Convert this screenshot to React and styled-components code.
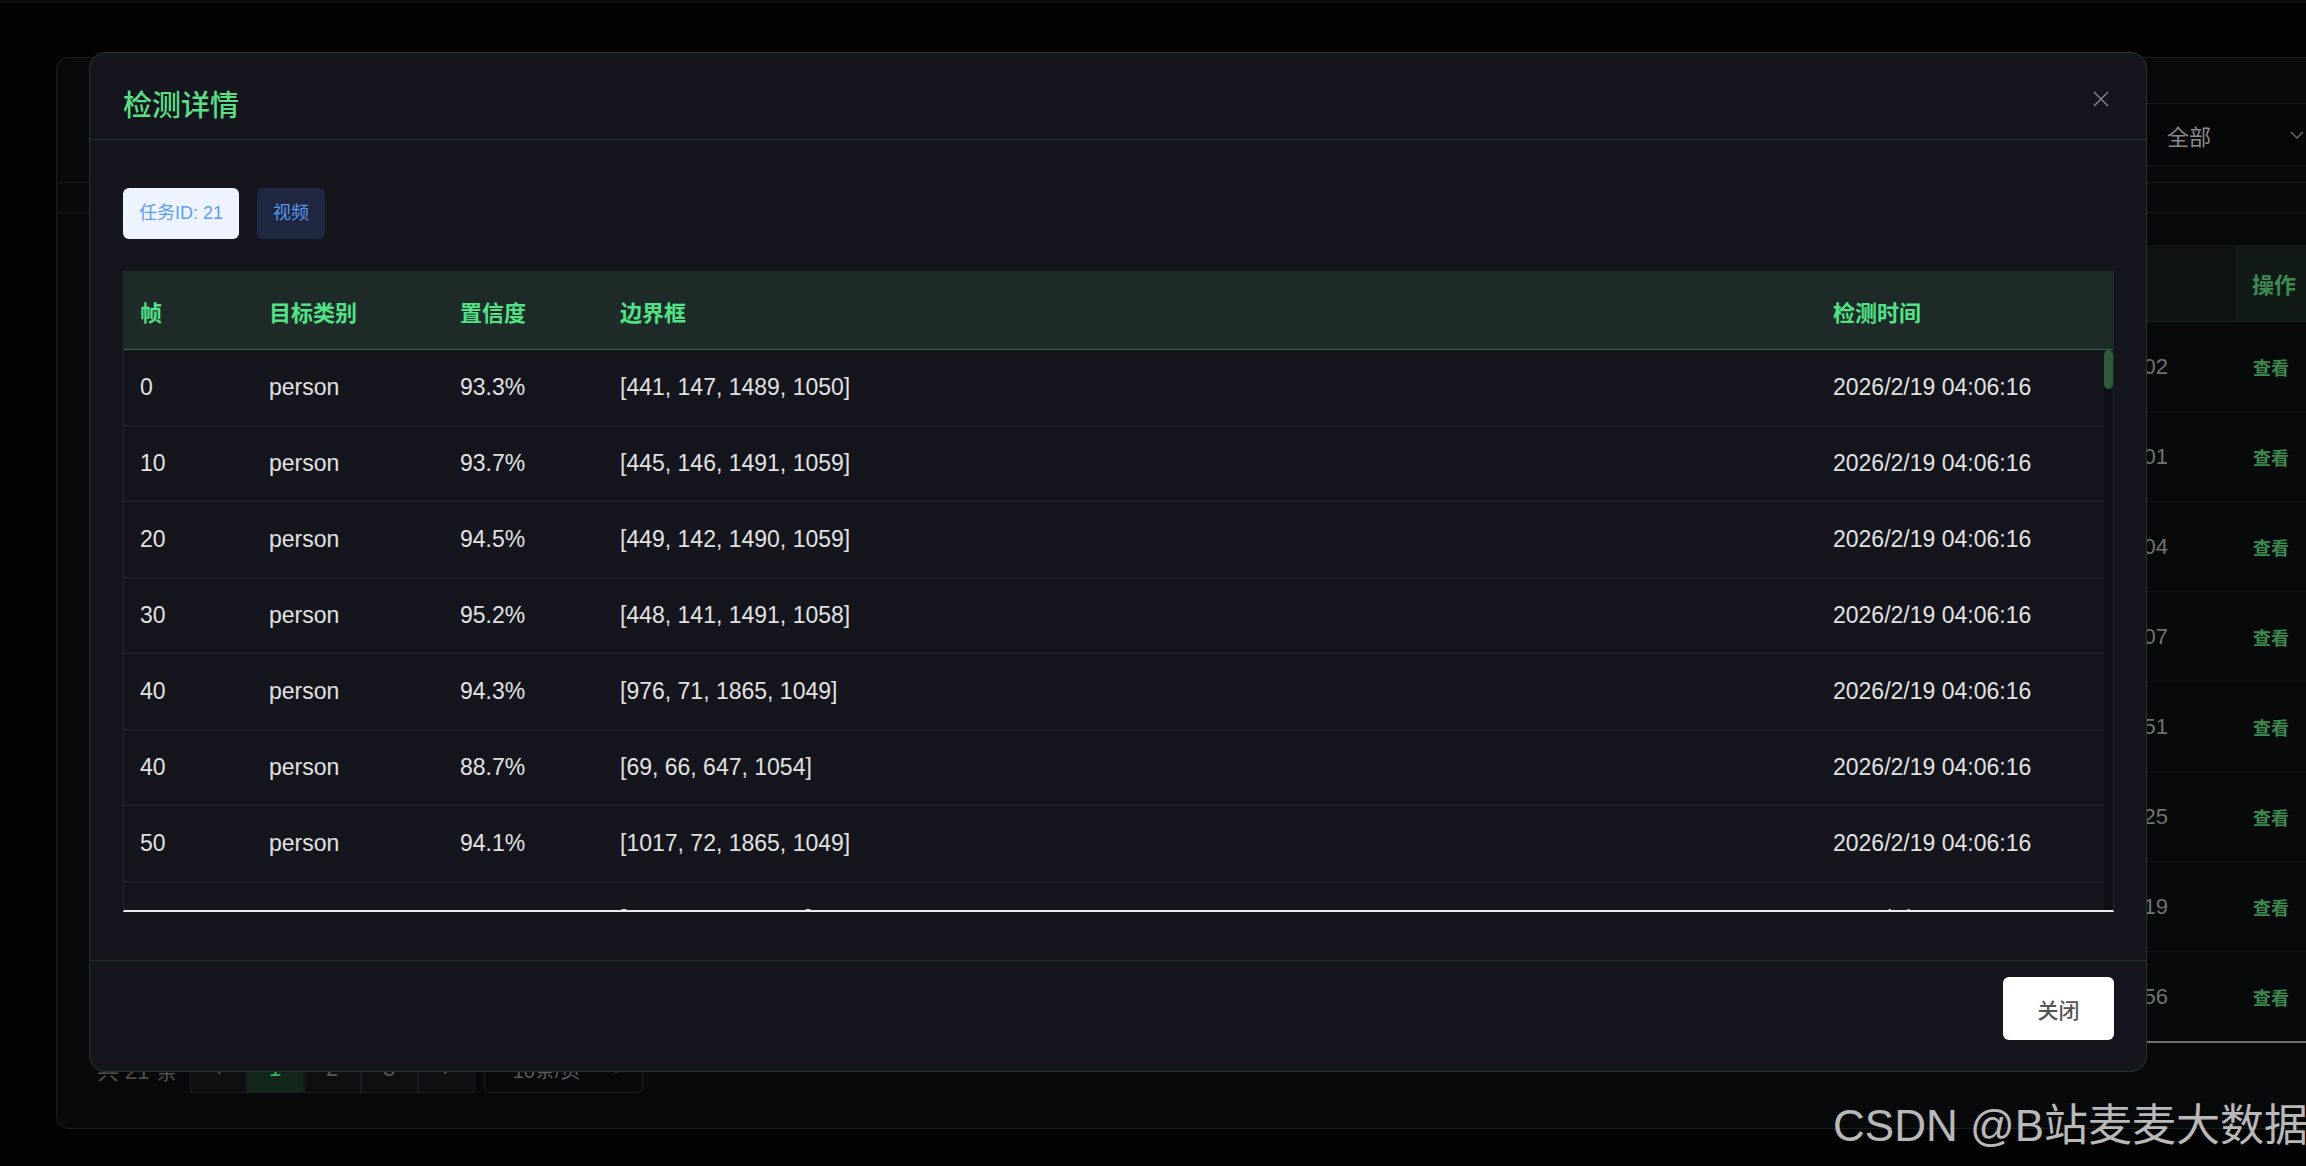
import React from "react";
import styled, { createGlobalStyle } from "styled-components";

const GlobalStyle = createGlobalStyle`
  html, body {
    margin: 0;
    padding: 0;
    background: #030303;
  }
  body {
    font-family: "Liberation Sans", "Noto Sans CJK SC", sans-serif;
  }
  * {
    box-sizing: border-box;
  }
`;

const detections = [
  ["0", "person", "93.3%", "[441, 147, 1489, 1050]"],
  ["10", "person", "93.7%", "[445, 146, 1491, 1059]"],
  ["20", "person", "94.5%", "[449, 142, 1490, 1059]"],
  ["30", "person", "95.2%", "[448, 141, 1491, 1058]"],
  ["40", "person", "94.3%", "[976, 71, 1865, 1049]"],
  ["40", "person", "88.7%", "[69, 66, 647, 1054]"],
  ["50", "person", "94.1%", "[1017, 72, 1865, 1049]"],
  ["50", "person", "89.2%", "[68, 65, 646, 1053]"],
];

const bgTimes = ["02", "01", "04", "07", "51", "25", "19", "56"];

// the list holds ~106 detections, only the first rows fit in view
const thumbHeight = 39;

export default function App() {
  return (
    <Page>
      <GlobalStyle />
      <Card>
        <FilterBar>
          <SearchBox />
          <SelectBox>
            全部
            <Chevron viewBox="0 0 16 16">
              <path d="M2 5l6 6 6-6" />
            </Chevron>
          </SelectBox>
        </FilterBar>
        <StatsStrip />
        <BgTable>
          <BgHeadRow>
            <BgCell />
            <BgCell />
            <BgActionHead>操作</BgActionHead>
          </BgHeadRow>
          {bgTimes.map((t, i) => (
            <BgRow key={i}>
              <BgCell />
              <BgTime>2026/2/19 04:06:{t}</BgTime>
              <BgAction>查看</BgAction>
            </BgRow>
          ))}
        </BgTable>
        <Pager>
          <PagerTotal>共 21 条</PagerTotal>
          <PagerButtons>
            <PageBtn>‹</PageBtn>
            <PageBtn active>1</PageBtn>
            <PageBtn>2</PageBtn>
            <PageBtn>3</PageBtn>
            <PageBtn>›</PageBtn>
          </PagerButtons>
          <PageSize>
            10条/页
            <Chevron viewBox="0 0 16 16">
              <path d="M2 5l6 6 6-6" />
            </Chevron>
          </PageSize>
        </Pager>
      </Card>

      <Mask>
        <Modal>
          <ModalHeader>
            <ModalTitle>检测详情</ModalTitle>
            <CloseIcon viewBox="0 0 16 16">
              <path d="M1 1l14 14M15 1L1 15" />
            </CloseIcon>
          </ModalHeader>
          <ModalBody>
            <TagRow>
              <Tag light>任务ID: 21</Tag>
              <Tag>视频</Tag>
            </TagRow>
            <DetailTable>
              <HeadRow>
                <HeadCell>帧</HeadCell>
                <HeadCell>目标类别</HeadCell>
                <HeadCell>置信度</HeadCell>
                <HeadCell>边界框</HeadCell>
                <HeadCell>检测时间</HeadCell>
              </HeadRow>
              <BodyWrap>
                <RowsViewport>
                  {detections.map((r, i) => (
                    <BodyRow key={i}>
                      <Cell>{r[0]}</Cell>
                      <Cell>{r[1]}</Cell>
                      <Cell>{r[2]}</Cell>
                      <Cell>{r[3]}</Cell>
                      <Cell>2026/2/19 04:06:16</Cell>
                    </BodyRow>
                  ))}
                </RowsViewport>
                <ScrollRail>
                  <ScrollThumb style={{ height: thumbHeight }} />
                </ScrollRail>
              </BodyWrap>
            </DetailTable>
          </ModalBody>
          <ModalFooter>
            <CloseButton>关闭</CloseButton>
          </ModalFooter>
        </Modal>
      </Mask>

      <Watermark>CSDN @B站麦麦大数据</Watermark>
    </Page>
  );
}

const Page = styled.div`
  position: relative;
  width: 2306px;
  height: 1166px;
  overflow: hidden;
  background: #030303;
  border-top: 3px solid #0b0d0c;
  padding: 54px 0 0 56px;
`;

const Card = styled.div`
  width: 2300px;
  height: 1072px;
  background: #08090b;
  border: 1px solid #14231a;
  border-radius: 12px;
  display: flex;
  flex-direction: column;
`;

const FilterBar = styled.div`
  display: flex;
  align-items: flex-start;
  gap: 24px;
  height: 125px;
  padding: 45px 24px 0 40px;
  border-bottom: 1px solid #141b17;
`;

const SearchBox = styled.div`
  flex: 1;
  height: 63px;
  border: 1px solid #1a1d20;
  border-radius: 6px;
`;

const SelectBox = styled.div`
  width: 200px;
  height: 63px;
  display: flex;
  align-items: center;
  justify-content: space-between;
  padding: 0 26px 0 36px;
  border-top: 1px solid #15181a;
  border-bottom: 1px solid #15181a;
  background: #060708;
  color: #8a8a8a;
  font-size: 22px;
`;

const Chevron = styled.svg`
  width: 16px;
  height: 16px;
  fill: none;
  stroke: #6a6a6a;
  stroke-width: 1.5;
`;

const StatsStrip = styled.div`
  height: 30px;
  border-bottom: 1px solid #151c18;
`;

const BgTable = styled.div`
  margin: 32px 0 0 70px;
  border-bottom: 2px solid #6f6f6f;
`;

const bgColumns = "1fr 289px 120px";

const BgHeadRow = styled.div`
  display: grid;
  grid-template-columns: ${bgColumns};
  height: 77px;
  background: #0e1211;
  border-bottom: 1px solid #17291d;
`;

const BgRow = styled.div`
  display: grid;
  grid-template-columns: ${bgColumns};
  height: 90px;
  border-bottom: 1px solid #111314;
  &:last-child {
    border-bottom: none;
    height: 89px;
  }
`;

const BgCell = styled.div``;

const BgTime = styled.div`
  display: flex;
  align-items: center;
  justify-content: flex-end;
  padding-right: 67px;
  color: #727272;
  font-size: 22px;
  white-space: nowrap;
`;

const BgActionHead = styled.div`
  display: flex;
  align-items: center;
  padding-left: 17px;
  background: #111a14;
  color: #3e8a54;
  font-size: 22px;
  font-weight: 700;
`;

const BgAction = styled.div`
  display: flex;
  align-items: center;
  padding-left: 18px;
  color: #3b8b51;
  font-size: 18px;
  font-weight: 700;
`;

const Pager = styled.div`
  display: flex;
  align-items: center;
  gap: 12px;
  height: 48px;
  padding-left: 40px;
  margin-top: 2px;
`;

const PagerTotal = styled.div`
  color: #4e4e4e;
  font-size: 22px;
`;

const PagerButtons = styled.div`
  display: flex;
  height: 48px;
`;

const PageBtn = styled.div`
  width: 57px;
  height: 48px;
  display: flex;
  align-items: center;
  justify-content: center;
  border: 1px solid #1a1b1e;
  background: ${(p) => (p.active ? "#13261a" : "#0e0f11")};
  color: ${(p) => (p.active ? "#3fae5c" : "#5a5a5a")};
  font-size: 22px;
`;

const PageSize = styled.div`
  width: 159px;
  height: 48px;
  margin-left: -3px;
  display: flex;
  align-items: center;
  justify-content: space-between;
  padding: 0 18px 0 28px;
  border: 1px solid #1c1e21;
  border-radius: 6px;
  color: #5a5a5a;
  font-size: 20px;
`;

const Mask = styled.div`
  position: absolute;
  inset: 0;
  display: flex;
  align-items: flex-start;
  padding: 49px 0 0 89px;
`;

const Modal = styled.div`
  width: 2058px;
  height: 1020px;
  display: flex;
  flex-direction: column;
  background: #14151d;
  border: 1px solid #1f3a29;
  border-radius: 16px;
  overflow: hidden;
`;

const ModalHeader = styled.div`
  display: flex;
  align-items: center;
  justify-content: space-between;
  height: 87px;
  padding: 14px 37px 0 33px;
  border-bottom: 1px solid #1c3324;
`;

const ModalTitle = styled.div`
  margin-top: 6px;
  color: #5ade86;
  font-size: 29px;
  font-weight: 500;
  line-height: 29px;
`;

const CloseIcon = styled.svg`
  width: 16px;
  height: 16px;
  margin-bottom: 9px;
  fill: none;
  stroke: #8a8a8a;
  stroke-width: 1.4;
`;

const ModalBody = styled.div`
  padding: 48px 32px 48px 33px;
`;

const TagRow = styled.div`
  display: flex;
  gap: 18px;
`;

const Tag = styled.div`
  height: 51px;
  line-height: 51px;
  padding: 0 16px;
  border-radius: 6px;
  font-size: 18px;
  background: ${(p) => (p.light ? "#eef4ff" : "#1f2840")};
  color: ${(p) => (p.light ? "#5d9cf2" : "#5a98ec")};
`;

const DetailTable = styled.div`
  margin-top: 32px;
  border: 1px solid #1d2c25;
  border-bottom: 2px solid #ececec;
`;

const columns = "129px 191px 160px 1213px 1fr";

const HeadRow = styled.div`
  display: grid;
  grid-template-columns: ${columns};
  height: 78px;
  align-items: center;
  background: #1e2b28;
  border-bottom: 1px solid #2d6a43;
`;

const HeadCell = styled.div`
  padding-left: 16px;
  color: #52e287;
  font-size: 22px;
  font-weight: 700;
`;

const BodyWrap = styled.div`
  display: flex;
  height: 560px;
`;

const RowsViewport = styled.div`
  flex: 1;
  overflow: hidden;
`;

const ScrollRail = styled.div`
  width: 9px;
  background: #0e0f14;
`;

const ScrollThumb = styled.div`
  width: 9px;
  border-radius: 5px;
  background: #2e5b3c;
`;

const BodyRow = styled.div`
  display: grid;
  grid-template-columns: ${columns};
  height: 76px;
  align-items: center;
  border-bottom: 1px solid #22242c;
`;

const Cell = styled.div`
  padding-left: 16px;
  color: #e2e2e2;
  font-size: 23px;
  white-space: nowrap;
`;

const ModalFooter = styled.div`
  display: flex;
  justify-content: flex-end;
  padding: 16px 32px 31px;
  border-top: 1px solid #1c3324;
`;

const CloseButton = styled.button`
  width: 111px;
  height: 63px;
  border: none;
  border-radius: 6px;
  background: #ffffff;
  color: #555555;
  font-family: inherit;
  font-size: 21px;
  font-weight: 500;
`;

const Watermark = styled.div`
  position: absolute;
  right: -2px;
  top: 1099px;
  line-height: 48px;
  font-size: 44px;
  color: rgba(255, 255, 255, 0.72);
  white-space: nowrap;
`;
